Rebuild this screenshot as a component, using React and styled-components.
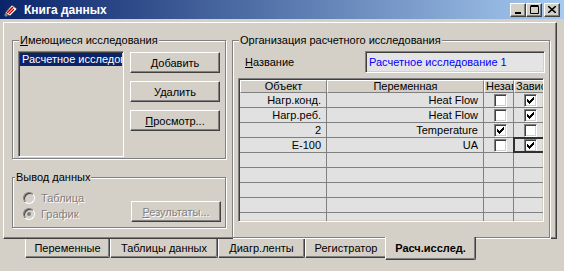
import React from 'react';
import styled, { createGlobalStyle, css } from 'styled-components';

const GlobalStyle = createGlobalStyle`
  html, body { margin: 0; padding: 0; background: #d4d0c8; }
  body {
    font-family: "Liberation Sans", Arial, sans-serif;
    font-size: 11px;
    color: #000;
  }
  * { box-sizing: border-box; }
`;

/* --- 3D edges --- */
const raised = css`
  border: 1px solid;
  border-color: #fff #404040 #404040 #fff;
  box-shadow: inset -1px -1px #808080;
`;

const sunken = css`
  border: 1px solid;
  border-color: #808080 #fff #fff #808080;
  box-shadow: inset 1px 1px #404040, inset -1px -1px #d4d0c8;
`;

/* --- Window frame --- */
const Window = styled.div`
  width: 564px;
  height: 271px;
  background: #d4d0c8;
  overflow: hidden;
  display: flex;
  flex-direction: column;
`;

const TitleBar = styled.div`
  height: 19px;
  flex: none;
  background: linear-gradient(90deg, #0a246a 0%, #a6caf0 100%);
  display: flex;
  align-items: center;
  padding: 0 4px 0 3px;
`;

const TitleText = styled.span`
  flex: 1;
  margin-left: 5px;
  color: #fff;
  font-weight: bold;
  font-size: 12px;
`;

const CaptionButton = styled.button`
  ${raised};
  width: 16px;
  height: 14px;
  padding: 0;
  margin-left: ${({ $gap }) => $gap || 0}px;
  background: #d4d0c8;
  display: flex;
  align-items: center;
  justify-content: center;
`;

const Body = styled.div`
  flex: 1;
  padding: 3px 7px 0 3px;
  display: flex;
  flex-direction: column;
`;

/* --- Tab page --- */
const Panel = styled.div`
  ${raised};
  height: 217px;
  padding: 11px 6px 0 8px;
  display: flex;
  gap: 6px;
`;

const LeftColumn = styled.div`
  width: 214px;
  display: flex;
  flex-direction: column;
  gap: 12px;
`;

const GroupBox = styled.fieldset`
  margin: 0;
  min-width: 0;
  padding: ${({ $pad }) => $pad};
  border: 1px solid #808080;
  box-shadow: 1px 1px 0 #fff, inset 1px 1px 0 #fff;
  width: ${({ $w }) => $w}px;
`;

const Legend = styled.legend`
  margin-left: 1px;
  padding: 0 1px;
  line-height: 13px;
  background: #d4d0c8;
`;

const Key = styled.span`
  text-decoration: underline;
`;

const Row = styled.div`
  display: flex;
  align-items: ${({ $align }) => $align || 'flex-start'};
  gap: ${({ $gap }) => $gap || 0}px;
`;

const ListBox = styled.div`
  ${sunken};
  width: 106px;
  height: 106px;
  padding: 1px 1px 0 1px;
  background: #d4d0c8;
  overflow: hidden;
`;

const ListItem = styled.div`
  height: 13px;
  line-height: 13px;
  padding-left: 2px;
  white-space: nowrap;
  overflow: hidden;
  background: ${({ $selected }) => ($selected ? '#0a246a' : 'transparent')};
  color: ${({ $selected }) => ($selected ? '#fff' : '#000')};
`;

const ButtonStack = styled.div`
  margin-top: 1px;
  display: flex;
  flex-direction: column;
  gap: 8px;
`;

const Button = styled.button`
  ${raised};
  width: 90px;
  height: 21px;
  padding: 0;
  background: #d4d0c8;
  font: inherit;
  color: ${({ disabled }) => (disabled ? '#808080' : '#000')};
  text-shadow: ${({ disabled }) => (disabled ? '1px 1px 0 #fff' : 'none')};
  margin-left: ${({ $push }) => ($push ? 'auto' : 0)};
`;

/* --- Output group --- */
const RadioList = styled.div`
  padding-left: 9px;
  display: flex;
  flex-direction: column;
`;

const RadioRow = styled.div`
  height: 16px;
  display: flex;
  align-items: center;
  gap: 6px;
  color: #808080;
  text-shadow: 1px 1px 0 #fff;
`;

const RadioDot = styled.span`
  width: 12px;
  height: 12px;
  border-radius: 50%;
  border: 1px solid;
  border-color: #808080 #fff #fff #808080;
  box-shadow: inset 1px 1px #404040, inset -1px -1px #d4d0c8;
  background: #d4d0c8;
  display: flex;
  align-items: center;
  justify-content: center;
  &::after {
    content: '';
    width: 4px;
    height: 4px;
    border-radius: 50%;
    background: ${({ $checked }) => ($checked ? '#808080' : 'transparent')};
  }
`;

/* --- Study group --- */
const NameLabel = styled.span`
  margin-left: 7px;
`;

const NameField = styled.div`
  ${sunken};
  width: 180px;
  height: 22px;
  margin-left: auto;
  padding: 3px 3px;
  background: #e4e4e4;
  color: #0000ff;
  line-height: 14px;
  white-space: nowrap;
`;

const Grid = styled.div`
  ${sunken};
  margin-top: 5px;
  width: 306px;
  height: 144px;
  overflow: hidden;
  background: #e1e1e1;
  padding: 1px;
`;

const GridRow = styled.div`
  display: grid;
  grid-template-columns: 87px 157px 30px 70px;
  width: 344px;
  height: ${({ $head }) => ($head ? 13 : 15)}px;
`;

const HeadCell = styled.div`
  border: 1px solid;
  border-color: #fff #808080 #808080 #fff;
  background: #d4d0c8;
  line-height: 11px;
  white-space: nowrap;
  overflow: hidden;
  text-align: ${({ $align }) => $align || 'center'};
  padding-left: ${({ $align }) => ($align === 'left' ? 1 : 0)}px;
`;

const Cell = styled.div`
  border-right: 1px solid #808080;
  border-bottom: 1px solid #808080;
  line-height: 14px;
  text-align: right;
  padding-right: 5px;
  white-space: nowrap;
  overflow: hidden;
`;

const CheckCell = styled.div`
  position: relative;
  border-right: 1px solid #808080;
  border-bottom: 1px solid #808080;
  display: flex;
  align-items: center;
  padding-left: 10px;
  ${({ $focus }) =>
    $focus &&
    css`
      &::before {
        content: '';
        position: absolute;
        left: -1px;
        top: -1px;
        right: 0;
        bottom: -1px;
        border: 2px solid #303030;
        pointer-events: none;
      }
    `}
`;

const CheckBox = styled.span`
  width: 13px;
  height: 13px;
  border: 1px solid;
  border-color: #808080 #fff #fff #808080;
  box-shadow: inset 1px 1px #404040, inset -1px -1px #d4d0c8;
  background: #fff;
  display: flex;
  align-items: center;
  justify-content: center;
`;

/* --- Tabs --- */
const TabStrip = styled.div`
  display: flex;
  align-items: flex-start;
  padding-left: 22px;
`;

const Tab = styled.div`
  height: 19px;
  padding: 0 6px;
  border-left: 1px solid #fff;
  border-right: 1px solid #404040;
  border-bottom: 1px solid #404040;
  border-bottom-right-radius: 2px;
  box-shadow: inset -1px -1px #808080;
  background: #d4d0c8;
  line-height: 18px;
  text-align: center;
  white-space: nowrap;
  width: ${({ $w }) => $w}px;
  ${({ $active }) =>
    $active &&
    css`
      position: relative;
      z-index: 1;
      height: 23px;
      margin: -2px -2px 0 -2px;
      padding-top: 2px;
      font-weight: bold;
    `}
`;

function Check() {
  return (
    <svg width="7" height="7" viewBox="0 0 7 7">
      <path d="M0 2 H1 V3 H2 V4 H3 V3 H4 V2 H5 V1 H6 V0 H7 V3 H6 V4 H5 V5 H4 V6 H3 V7 H2 V6 H1 V5 H0 Z" fill="#000" />
    </svg>
  );
}

function AppIcon() {
  return (
    <svg width="16" height="16" viewBox="0 0 16 16">
      <path d="M2 11 L9 3 L14 7 L7 14 Z" fill="#fff" stroke="#404040" strokeWidth="0.8" />
      <path d="M4 11 L10 5" stroke="#c00000" strokeWidth="1.6" />
      <path d="M6 12 L11 7" stroke="#c00000" strokeWidth="1.2" />
      <path d="M1 13 L3 11 L5 13 L3 15 Z" fill="#808080" />
    </svg>
  );
}

const studies = [{ id: 1, name: 'Расчетное исследование 1' }];

const rows = [
  { obj: 'Нагр.конд.', variable: 'Heat Flow', ind: false, dep: true },
  { obj: 'Нагр.реб.', variable: 'Heat Flow', ind: false, dep: true },
  { obj: '2', variable: 'Temperature', ind: true, dep: false },
  { obj: 'E-100', variable: 'UA', ind: false, dep: true, focus: true },
];

const tabs = [
  { label: 'Переменные', w: 85 },
  { label: 'Таблицы данных', w: 108 },
  { label: 'Диагр.ленты', w: 87 },
  { label: 'Регистратор', w: 82 },
  { label: 'Расч.исслед.', w: 91, active: true },
];

export default function App() {
  const emptyRows = Array.from({ length: 6 });

  return (
    <>
      <GlobalStyle />
      <Window>
        <TitleBar>
          <AppIcon />
          <TitleText>Книга данных</TitleText>
          <CaptionButton>
            <svg width="8" height="8" viewBox="0 0 8 8"><rect x="1" y="6" width="6" height="2" fill="#000" /></svg>
          </CaptionButton>
          <CaptionButton>
            <svg width="9" height="9" viewBox="0 0 9 9"><path d="M0.5 1.5 H8.5 V8.5 H0.5 Z M0.5 0.5 H8.5" fill="none" stroke="#000" /></svg>
          </CaptionButton>
          <CaptionButton $gap={2}>
            <svg width="8" height="7" viewBox="0 0 8 7"><path d="M0 0 L8 7 M8 0 L0 7" stroke="#000" strokeWidth="1.6" /></svg>
          </CaptionButton>
        </TitleBar>

        <Body>
          <Panel>
            <LeftColumn>
              {/* ---------- studies ---------- */}
              <GroupBox $w={214} $pad="4px 4px 1px 5px">
                <Legend><Key>И</Key>меющиеся исследования</Legend>
                <Row $gap={6}>
                  <ListBox>
                    {studies.map(s => (
                      <ListItem key={s.id} $selected>{s.name}</ListItem>
                    ))}
                  </ListBox>
                  <ButtonStack>
                    <Button><Key>Д</Key>обавить</Button>
                    <Button>Удалить</Button>
                    <Button><Key>П</Key>росмотр...</Button>
                  </ButtonStack>
                </Row>
              </GroupBox>

              {/* ---------- output ---------- */}
              <GroupBox $w={214} $pad="6px 4px 5px 1px">
                <Legend>Вывод данных</Legend>
                <Row $align="flex-end">
                  <RadioList>
                    <RadioRow><RadioDot />Таблица</RadioRow>
                    <RadioRow><RadioDot $checked />График</RadioRow>
                  </RadioList>
                  <Button disabled $push><Key>Р</Key>езультаты...</Button>
                </Row>
              </GroupBox>
            </LeftColumn>

            {/* ---------- study setup ---------- */}
            <GroupBox $w={318} $pad="4px 4px 5px 5px">
              <Legend>Организация расчетного исследования</Legend>
              <Row $align="center">
                <NameLabel><Key>Н</Key>азвание</NameLabel>
                <NameField>Расчетное исследование 1</NameField>
              </Row>
              <Grid>
                <GridRow $head>
                  <HeadCell>Объект</HeadCell>
                  <HeadCell>Переменная</HeadCell>
                  <HeadCell $align="left">Независимая</HeadCell>
                  <HeadCell $align="left">Зависимая</HeadCell>
                </GridRow>
                {rows.map((r, i) => (
                  <GridRow key={i}>
                    <Cell>{r.obj}</Cell>
                    <Cell>{r.variable}</Cell>
                    <CheckCell><CheckBox>{r.ind && <Check />}</CheckBox></CheckCell>
                    <CheckCell $focus={r.focus}><CheckBox>{r.dep && <Check />}</CheckBox></CheckCell>
                  </GridRow>
                ))}
                {emptyRows.map((_, i) => (
                  <GridRow key={`e${i}`}>
                    <Cell /><Cell /><Cell /><Cell />
                  </GridRow>
                ))}
              </Grid>
            </GroupBox>
          </Panel>

          <TabStrip>
            {tabs.map(t => (
              <Tab key={t.label} $w={t.w} $active={t.active}>{t.label}</Tab>
            ))}
          </TabStrip>
        </Body>
      </Window>
    </>
  );
}
